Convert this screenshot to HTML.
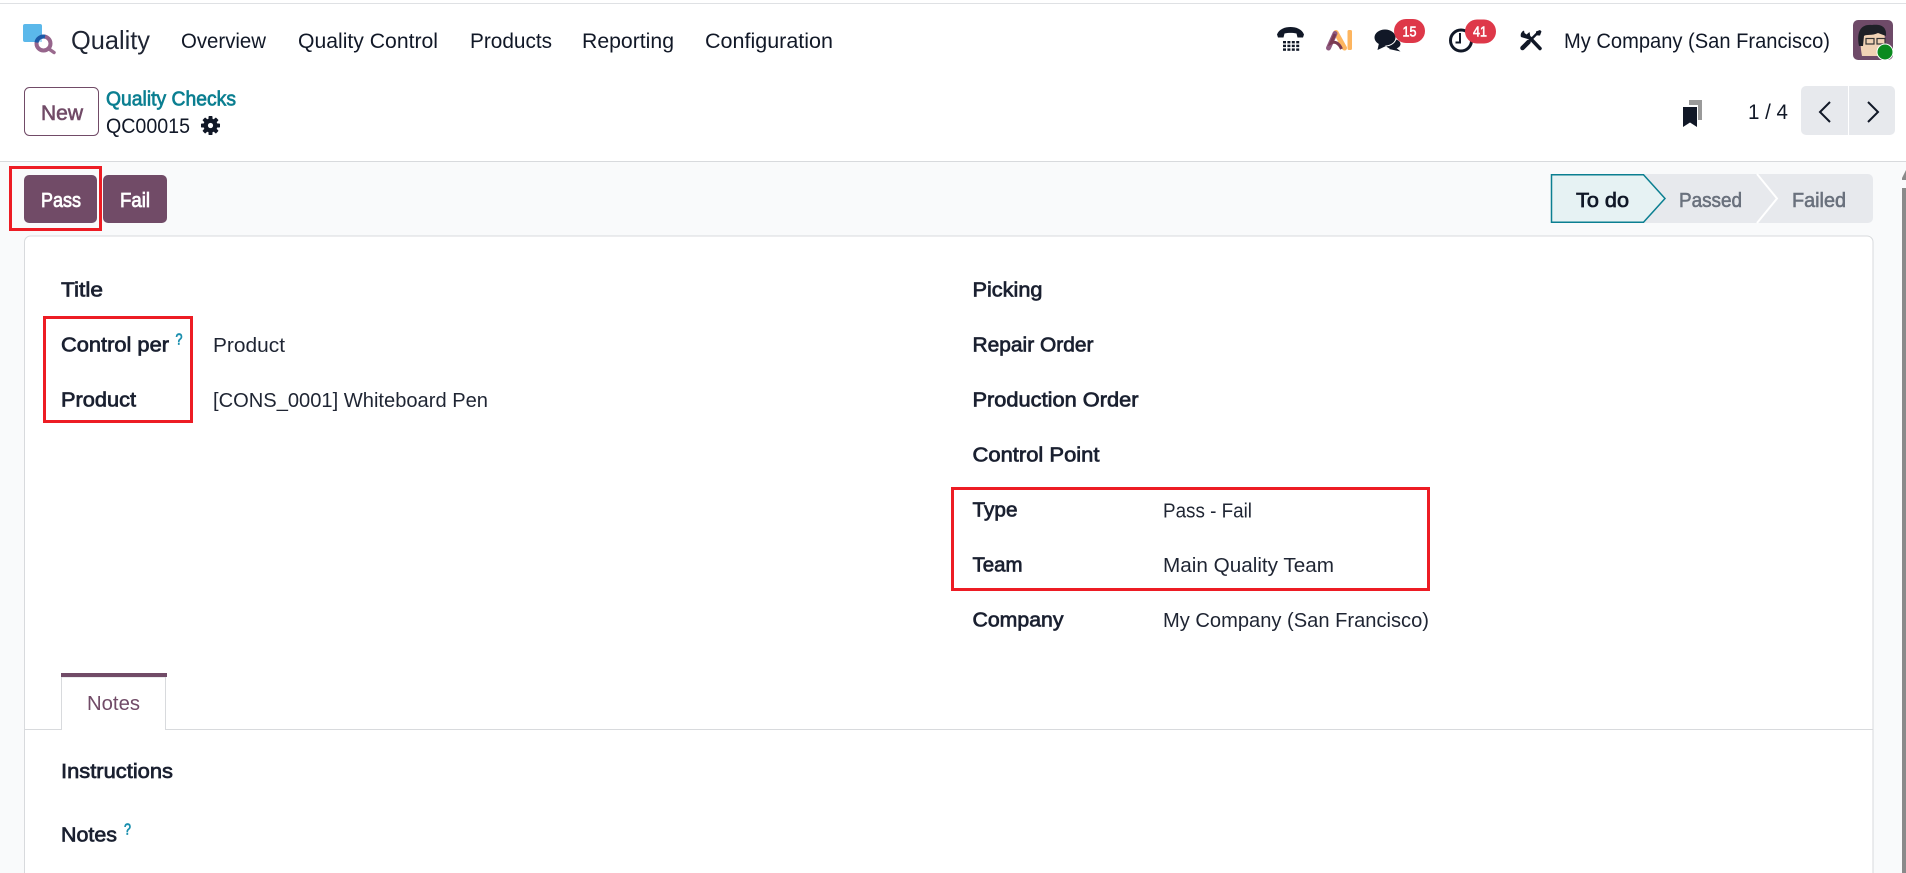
<!DOCTYPE html>
<html lang="en">
<head>
<meta charset="utf-8">
<title>Quality</title>
<style>
html,body{margin:0;padding:0;width:1906px;height:873px;overflow:hidden;background:#fff}
svg{display:block}
text{font-family:"Liberation Sans",Arial,sans-serif;font-size:20.5px;fill:#1f2533}
.b{fill:#1a2030;stroke:#1a2030;stroke-width:.7px;font-size:20.5px}
.n{font-size:21px;fill:#111827}
.w{fill:#fff;stroke:#fff;stroke-width:.75px;font-size:20.5px}
.g{fill:#6a717d;stroke:#6a717d;stroke-width:.6px;font-size:20.5px}
.q{font-size:16px;fill:#1a8fae;stroke:#1a8fae;stroke-width:.7px}
</style>
</head>
<body>
<svg width="1906" height="873" viewBox="0 0 1906 873" xmlns="http://www.w3.org/2000/svg">
<rect width="1906" height="873" fill="#fff"/>
<rect x="0" y="3" width="1906" height="1" fill="#dfe1e4"/>
<rect x="0" y="162" width="1906" height="711" fill="#f9fafb"/>
<rect x="0" y="161" width="1906" height="1" fill="#d8dadd"/>

<!-- logo -->
<path d="M25 24H40a2 2 0 0 1 2 2V42H25a2 2 0 0 1-2-2V26a2 2 0 0 1 2-2z" fill="#5bb8ea"/>
<circle cx="43.500" cy="43.500" r="7" fill="#fff"/>
<path d="M36.500 42H42V36.500A7 7 0 0 0 36.500 42z" fill="#a9d9f3"/>
<path d="M49 49l5 3.500" stroke="#9a6a8e" stroke-width="3.500" stroke-linecap="round"/>
<circle cx="43.500" cy="43.500" r="7" fill="none" stroke="#96658c" stroke-width="4"/>
<path d="M36.500 42.500A7 7 0 0 1 45 36.700" fill="none" stroke="#1b5ba8" stroke-width="4"/>

<!-- nav -->
<text x="71" y="49" textLength="79" lengthAdjust="spacingAndGlyphs" style="font-size:26px">Quality</text>
<text class="n" x="181" y="48" textLength="85" lengthAdjust="spacingAndGlyphs">Overview</text>
<text class="n" x="298" y="48" textLength="140" lengthAdjust="spacingAndGlyphs">Quality Control</text>
<text class="n" x="470" y="48" textLength="82" lengthAdjust="spacingAndGlyphs">Products</text>
<text class="n" x="582" y="48" textLength="92" lengthAdjust="spacingAndGlyphs">Reporting</text>
<text class="n" x="705" y="48" textLength="128" lengthAdjust="spacingAndGlyphs">Configuration</text>

<!-- phone -->
<path d="M1277 34.500C1279 29 1285 27 1290.500 27S1302 29 1304 34.500L1303 37.500H1297.500L1296.500 33.500C1293 32.600 1288 32.600 1284.500 33.500L1283.500 37.500H1278z" fill="#111827"/>
<g fill="#111827">
<rect x="1283" y="41" width="3" height="2.400"/><rect x="1287.400" y="41" width="3" height="2.400"/><rect x="1291.800" y="41" width="3" height="2.400"/><rect x="1296.200" y="41" width="3" height="2.400"/>
<rect x="1283" y="44.700" width="3" height="2.400"/><rect x="1287.400" y="44.700" width="3" height="2.400"/><rect x="1291.800" y="44.700" width="3" height="2.400"/><rect x="1296.200" y="44.700" width="3" height="2.400"/>
<rect x="1283" y="48.400" width="3" height="2.400"/><rect x="1287.400" y="48.400" width="3" height="2.400"/><rect x="1291.800" y="48.400" width="3" height="2.400"/><rect x="1296.200" y="48.400" width="3" height="2.400"/>
</g>

<!-- AI -->
<path d="M1336 32.500L1344.500 48" stroke="#fdb55f" stroke-width="5" stroke-linecap="round" fill="none"/>
<path d="M1335 33.500L1328.500 48" stroke="#8f5a80" stroke-width="5" stroke-linecap="round" fill="none"/>
<path d="M1335 34L1331 43C1335 41 1339 43 1341.500 49" stroke="#7a3b52" stroke-width="3" fill="none"/>
<rect x="1347.500" y="30" width="4.500" height="20" rx="1.500" fill="#fdb55f"/>

<!-- chat -->
<ellipse cx="1393" cy="44" rx="7.500" ry="5" fill="#111827"/>
<path d="M1394 46L1400.500 51.500 1389 49z" fill="#111827"/>
<ellipse cx="1385" cy="37.500" rx="11" ry="8.500" fill="#111827" stroke="#fff" stroke-width="1"/>
<path d="M1379 43L1377.500 50 1386 46z" fill="#111827"/>
<rect x="1394" y="19" width="31" height="24" rx="12" fill="#de3849"/>
<text x="1402.500" y="36.500" textLength="14" lengthAdjust="spacingAndGlyphs" style="font-size:15px;fill:#fff;stroke:#fff;stroke-width:.6px">15</text>

<!-- clock -->
<circle cx="1461" cy="40.500" r="10.500" fill="none" stroke="#111827" stroke-width="3"/>
<path d="M1460 33V42.500H1455.500" fill="none" stroke="#111827" stroke-width="2"/>
<rect x="1465" y="19.500" width="31" height="24" rx="12" fill="#de3849"/>
<text x="1473" y="36.500" textLength="14" lengthAdjust="spacingAndGlyphs" style="font-size:15px;fill:#fff;stroke:#fff;stroke-width:.6px">41</text>

<!-- tools -->
<path d="M1522.500 48L1528.500 42" stroke="#111827" stroke-width="4.500" stroke-linecap="round"/>
<path d="M1528 42.500L1537 33.500" stroke="#111827" stroke-width="2.500"/>
<path d="M1536 31.500l4-1.500 1.500 1.500-1.500 4-2.500 0-1.500-1.500z" fill="#111827"/>
<path d="M1530 38L1540 48.500" stroke="#111827" stroke-width="3.500" stroke-linecap="round"/>
<path d="M1524 30.500A5 5 0 0 0 1521 37L1526 38.500 1531 40 1530 34.500 1529.500 32 1526.500 34.500 1524.500 33z" fill="#111827"/>

<text class="n" x="1564" y="48" textLength="266" lengthAdjust="spacingAndGlyphs">My Company (San Francisco)</text>

<!-- avatar -->
<rect x="1853" y="20" width="40" height="40" rx="5" fill="#6e4a68"/>
<path d="M1862 56C1860 46 1860 36 1863 32L1884 32C1886 42 1885 50 1880 56z" fill="#f0d2b5"/>
<path d="M1859 46C1856 30 1862 24 1872 25 1880 24 1887 26 1886 36L1878 33C1872 36 1866 34 1864 36L1863 46z" fill="#1e2027"/>
<rect x="1866" y="38.500" width="8" height="5.500" fill="none" stroke="#333" stroke-width="1.200"/>
<rect x="1877" y="38.500" width="8" height="5.500" fill="none" stroke="#333" stroke-width="1.200"/>
<circle cx="1885" cy="52" r="8.500" fill="#fff"/>
<circle cx="1885" cy="52" r="7.500" fill="#0a8a1f"/>

<!-- New + breadcrumb -->
<rect x="24.500" y="87.500" width="74" height="48" rx="5" fill="#fff" stroke="#714b67"/>
<text x="41" y="120" textLength="42" lengthAdjust="spacingAndGlyphs" style="font-size:21px;fill:#714b67;stroke:#714b67;stroke-width:.6px">New</text>
<text x="106" y="105.500" textLength="130" lengthAdjust="spacingAndGlyphs" style="font-size:20.500px;fill:#0b7f91;stroke:#0b7f91;stroke-width:.7px">Quality Checks</text>
<text x="106" y="133" textLength="84" lengthAdjust="spacingAndGlyphs" style="font-size:21px;fill:#111827">QC00015</text>
<!-- gear -->
<g transform="translate(210.500 125.500)" fill="#111827">
<circle r="7"/>
<rect x="-2" y="-9.500" width="4" height="19" rx=".8"/>
<rect x="-2" y="-9.500" width="4" height="19" rx=".8" transform="rotate(45)"/>
<rect x="-2" y="-9.500" width="4" height="19" rx=".8" transform="rotate(90)"/>
<rect x="-2" y="-9.500" width="4" height="19" rx=".8" transform="rotate(135)"/>
<circle r="2.600" fill="#fff"/>
</g>

<!-- bookmark + pager -->
<path d="M1689 100H1702V120H1698V105H1689z" fill="#9a9a9a"/>
<path d="M1683 107H1697V127L1690 122.500 1683 127z" fill="#111827"/>
<text x="1748" y="119" textLength="40" lengthAdjust="spacingAndGlyphs" style="font-size:21px;fill:#111827">1 / 4</text>
<path d="M1848 86H1806a5 5 0 0 0-5 5V130a5 5 0 0 0 5 5H1848z" fill="#e7e9ed"/>
<path d="M1849 86H1890a5 5 0 0 1 5 5V130a5 5 0 0 1-5 5H1849z" fill="#e7e9ed"/>
<path d="M1830 102L1820 112 1830 122" fill="none" stroke="#111827" stroke-width="2"/>
<path d="M1868 102L1878 112 1868 122" fill="none" stroke="#111827" stroke-width="2"/>

<!-- red box 1 + buttons -->
<rect x="24" y="175" width="73" height="48" rx="5" fill="#714b67"/>
<rect x="103" y="175" width="64" height="48" rx="5" fill="#714b67"/>
<text class="w" x="41" y="207" textLength="40" lengthAdjust="spacingAndGlyphs">Pass</text>
<text class="w" x="120" y="207" textLength="30" lengthAdjust="spacingAndGlyphs">Fail</text>
<rect x="10.500" y="167.500" width="90" height="62" fill="none" stroke="#ed1c24" stroke-width="3"/>

<!-- status bar -->
<path d="M1640 174H1868a5 5 0 0 1 5 5V218a5 5 0 0 1-5 5H1640z" fill="#e7e9ed"/>
<path d="M1757 174L1777 198.500 1757 223" fill="none" stroke="#fff" stroke-width="2"/>
<path d="M1551.500 174.700H1643.500L1665 198.500 1643.500 222.300H1551.500z" fill="#e6f2f3" stroke="#0b7f91" stroke-width="1.500"/>
<text x="1576" y="207" textLength="53" lengthAdjust="spacingAndGlyphs" style="font-size:20.500px;fill:#111827;stroke:#111827;stroke-width:.7px">To do</text>
<text class="g" x="1679" y="207" textLength="63" lengthAdjust="spacingAndGlyphs">Passed</text>
<text class="g" x="1792" y="207" textLength="54" lengthAdjust="spacingAndGlyphs">Failed</text>

<!-- scrollbar -->
<path d="M1906 170L1902 178V180H1906z" fill="#8a8a8a"/>
<rect x="1902" y="188" width="4" height="685" fill="#8a8a8a"/>

<!-- card -->
<path d="M24.500 873V242a6 6 0 0 1 6-6H1867a6 6 0 0 1 6 6V873" fill="#fff" stroke="#d8dadd"/>

<!-- left column -->
<text class="b" x="61" y="296.500" textLength="42" lengthAdjust="spacingAndGlyphs">Title</text>
<text class="b" x="61" y="351.500" textLength="108" lengthAdjust="spacingAndGlyphs">Control per</text>
<text class="q" x="175.500" y="344.500" textLength="7" lengthAdjust="spacingAndGlyphs">?</text>
<text x="213" y="352" textLength="72" lengthAdjust="spacingAndGlyphs">Product</text>
<text class="b" x="61" y="406.500" textLength="75" lengthAdjust="spacingAndGlyphs">Product</text>
<text x="213" y="407" textLength="275" lengthAdjust="spacingAndGlyphs">[CONS_0001] Whiteboard Pen</text>
<rect x="44.500" y="317.500" width="147" height="104" fill="none" stroke="#ed1c24" stroke-width="3"/>

<!-- right column -->
<text class="b" x="972.500" y="296.500" textLength="70" lengthAdjust="spacingAndGlyphs">Picking</text>
<text class="b" x="972.500" y="351.500" textLength="121" lengthAdjust="spacingAndGlyphs">Repair Order</text>
<text class="b" x="972.500" y="406.500" textLength="166" lengthAdjust="spacingAndGlyphs">Production Order</text>
<text class="b" x="972.500" y="461.500" textLength="127" lengthAdjust="spacingAndGlyphs">Control Point</text>
<text class="b" x="972.500" y="516.500" textLength="45" lengthAdjust="spacingAndGlyphs">Type</text>
<text x="1163" y="517.500" textLength="89" lengthAdjust="spacingAndGlyphs">Pass - Fail</text>
<text class="b" x="972.500" y="571.500" textLength="50" lengthAdjust="spacingAndGlyphs">Team</text>
<text x="1163" y="572" textLength="171" lengthAdjust="spacingAndGlyphs">Main Quality Team</text>
<text class="b" x="972.500" y="626.500" textLength="91" lengthAdjust="spacingAndGlyphs">Company</text>
<text x="1163" y="627" textLength="266" lengthAdjust="spacingAndGlyphs">My Company (San Francisco)</text>
<rect x="952.500" y="488.500" width="476" height="101" fill="none" stroke="#ed1c24" stroke-width="3"/>

<!-- tabs -->
<path d="M25 729.500H61.500V677H165.500V729.500H1873" fill="none" stroke="#d8dadd"/>
<rect x="61" y="673" width="106" height="4" fill="#714b67"/>
<text x="87" y="710" textLength="53" lengthAdjust="spacingAndGlyphs" style="font-size:20.500px;fill:#714b67">Notes</text>
<text class="b" x="61" y="778" textLength="112" lengthAdjust="spacingAndGlyphs">Instructions</text>
<text class="b" x="61" y="841.500" textLength="56" lengthAdjust="spacingAndGlyphs">Notes</text>
<text class="q" x="124" y="834.500" textLength="7" lengthAdjust="spacingAndGlyphs">?</text>
</svg>
</body>
</html>
